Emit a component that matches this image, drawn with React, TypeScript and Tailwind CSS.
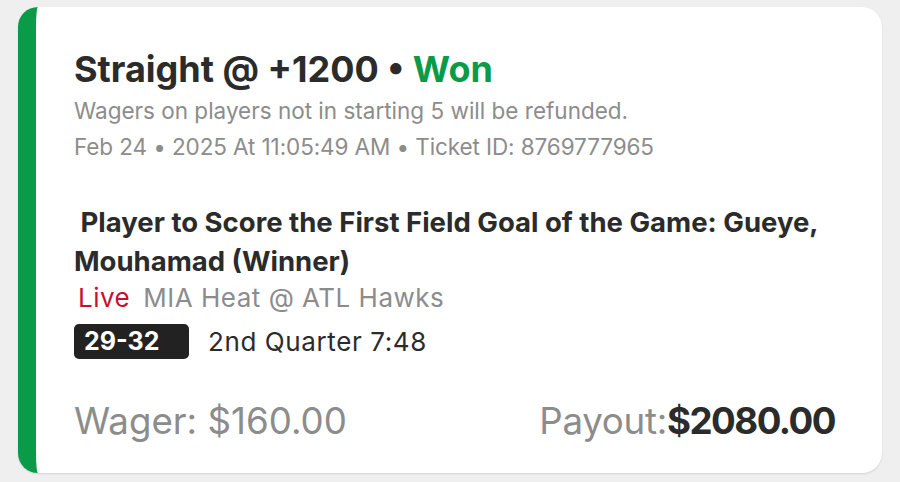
export default function App() {
  return (
    <div className="w-[900px] h-[482px] bg-[#efefef] pt-[7px] pl-[18px] font-['Inter',sans-serif]">
      <div className="w-[864px] h-[466px] rounded-[20px] bg-white border-l-[18px] border-[#0a9b48] shadow-[0_1px_2px_rgba(0,0,0,0.12)] pl-[38px] pr-[47px] pt-[42px] flex flex-col">
        {/* Header */}
        <div className="text-[36px] leading-[40px] font-bold text-[#2b2b2b]">
          Straight @ +1200 • <span className="text-[#0a9b48]">Won</span>
        </div>
        <div className="mt-[4px] text-[22.5px] leading-[36px] text-[#8c8c8c]">
          Wagers on players not in starting 5 will be refunded.
        </div>
        <div className="text-[22.5px] leading-[36px] tracking-[-0.1px] text-[#8c8c8c]">
          Feb 24 • 2025 At 11:05:49 AM • Ticket ID: 8769777965
        </div>

        {/* Selection */}
        <div className="mt-[38px] text-[27.5px] leading-[39px] font-bold text-[#2b2b2b] whitespace-pre-wrap">
          {" Player to Score the First Field Goal of the Game: Gueye,\nMouhamad (Winner)"}
        </div>
        <div className="mt-[1px] pl-[4px] text-[26px] leading-[32px] tracking-[0.5px] flex gap-[13px]">
          <span className="text-[#c8102e]">Live</span>
          <span className="text-[#8c8c8c]">MIA Heat @ ATL Hawks</span>
        </div>
        <div className="mt-[8px] flex items-center gap-[19px]">
          <div className="w-[115px] h-[35px] rounded-[5px] bg-[#222222] text-white font-bold text-[25px] leading-[35px] pl-[10px]">
            29-32
          </div>
          <span className="text-[26px] tracking-[0.6px] text-[#2b2b2b]">2nd Quarter 7:48</span>
        </div>

        {/* Footer */}
        <div className="mt-[38px] flex justify-between text-[36.7px] leading-[44px]">
          <span className="text-[#8c8c8c]">Wager: $160.00</span>
          <span>
            <span className="text-[#8c8c8c] tracking-[-0.3px]">Payout:</span>
            <span className="font-bold text-[#2b2b2b] tracking-[-1.5px]">$2080.00</span>
          </span>
        </div>
      </div>
    </div>
  );
}
